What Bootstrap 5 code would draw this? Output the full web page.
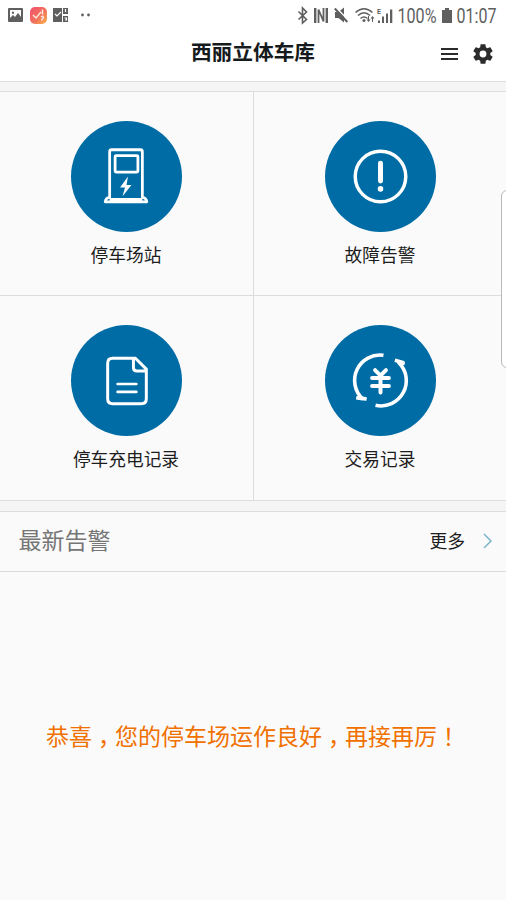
<!DOCTYPE html>
<html lang="zh-CN">
<head>
<meta charset="utf-8">
<meta name="viewport" content="width=device-width, initial-scale=1">
<title>西丽立体车库</title>
<link href="https://cdn.jsdelivr.net/npm/bootstrap@5.3.0/dist/css/bootstrap.min.css" rel="stylesheet">
<style>
body{font-family:"Noto Sans CJK SC",sans-serif;background:#fafafa;color:#1d1d1d;height:900px;overflow:hidden;line-height:1}
svg{display:block;flex:none}
.status-bar{height:32px;background:#fff}
.app-head{height:50px;background:#fff;border-bottom:1px solid #dcdcdc}
.app-title{font-size:20.7px;font-weight:700;color:#151a1c;margin:0;line-height:38px}
.head-tools{right:13px;top:11px;gap:15px}
.gap-band{height:10px;background:#f5f5f5}
.gap-band-top{height:9px}
.menu-grid{border-top:1px solid #dcdcdc}
.tile{height:204.4px;padding-top:29px;border-bottom:1px solid #dcdcdc;color:#1d1d1d;font-size:17.7px}
.tile-left{padding-right:1px}
.tile-right{border-left:1px solid #dcdcdc}
.tile-disc{width:111px;height:111px;border-radius:50%;background:#006ca5}
.tile-name{line-height:26px;margin-top:9px}
.latest{height:61px;border-top:1px solid #dcdcdc;border-bottom:1px solid #dcdcdc;padding:0 14px 0 18.500px}
.latest-title{font-size:23px;color:#757575;margin:0;padding-bottom:3px;font-weight:400}
.latest-more{font-size:17.8px;color:#1d1d1d;gap:18px}
.notice{font-size:23px;color:#f07000;margin:0;padding-top:148px;line-height:30px;white-space:nowrap}
.comma{display:inline-block;width:23px;text-align:left;padding-left:6px;font-feature-settings:"halt"}
.punct{font-family:"Noto Sans CJK TC",sans-serif}
.edge-panel{right:-8px;top:190px;width:13px;height:178px;background:#fff;border:1px solid #b9b9b9;border-radius:6px}
</style>
</head>
<body class="position-relative">
<div class="status-bar">
<svg width="506" height="32" viewBox="0 0 506 32" fill="#5f5f5f">
 <path fill-rule="evenodd" d="M9 8h13q1 0 1 1v12q0 1-1 1H9q-1 0-1-1V9q0-1 1-1zm1 2v8l3-3 2 2 3-4 3 4v-7zM13 11.500a1.200 1.200 0 1 1-.1 0z"/>
 <defs><linearGradient id="app" x2="1" y2="1"><stop stop-color="#f3506f"/><stop offset=".55" stop-color="#f2715c"/><stop offset="1" stop-color="#fbb64c"/></linearGradient></defs>
 <rect x="30" y="7" width="17" height="17" rx="5" fill="url(#app)"/>
 <path d="M33 15l3 3 5-6M42.500 9.500v5M41 17q2-1.500 2.300 0t-1.500 2.500v1" fill="none" stroke="#ffe5dc" stroke-width="1.500"/>
 <path d="M53 8h9v14h-9zM63 8h5v6h-5zM63 16h5v6h-5z"/>
 <path d="M55 14l2 2 4-4M65.500 9v3M64.500 18h2v2h-1.500" fill="none" stroke="#fff" stroke-width="1.200"/>
 <circle cx="82.500" cy="15" r="1.400"/><circle cx="88.500" cy="15" r="1.400"/>
 <path d="M298.500 11.500l8 8-4 3.500V8l4 4-8 7.500" fill="none" stroke="#5f5f5f" stroke-width="1.600"/>
 <path fill="none" stroke="#5f5f5f" stroke-width="2.400" d="M315.200 8v15M326.800 8v15"/>
 <path fill="none" stroke="#5f5f5f" stroke-width="1.800" d="M318.500 23V9.500l5 12V8"/>
 <path d="M335 12h3.500l5.500-4.500v15l-5.500-4.500H335z"/>
 <path d="M336 7.500l12.500 13" stroke="#fff" stroke-width="1.500"/><path d="M334.800 8.500l12.500 13.500" stroke="#5f5f5f" stroke-width="2"/>
 <path d="M355.500 12.500q8.500-7.500 17 0M358 15.500q6-5.500 12 0M360.500 18.500q3.500-3 7 0" fill="none" stroke="#5f5f5f" stroke-width="1.500"/>
 <circle cx="364" cy="20.500" r="1.500"/>
 <path d="M368.500 16v5M372.500 22v-5" stroke="#5f5f5f"/><path d="M366.500 19.500h4l-2 2.500zM370.500 18.500h4l-2-2.500z"/>
 <text x="377" y="14" font-family="Roboto, sans-serif" font-size="7" font-weight="700">E</text>
 <path d="M378 20.500h2V23h-2zM382 16.500h2V23h-2zM386 13.500h2V23h-2zM390 9.500h2.300V23H390z"/>
 <text x="397.500" y="23" font-family="Roboto, sans-serif" font-size="19.500" textLength="39" lengthAdjust="spacingAndGlyphs">100%</text>
 <path d="M445 8h4v2h3v13h-10V10h3z"/>
 <text x="456.500" y="23" font-family="Roboto, sans-serif" font-size="19.500" textLength="40" lengthAdjust="spacingAndGlyphs">01:07</text>
</svg>
</div>
<header class="app-head position-relative text-center">
 <h1 class="app-title">西丽立体车库</h1>
 <div class="head-tools position-absolute d-flex align-items-center">
  <svg width="17" height="22" viewBox="0 0 17 22"><path d="M0 6h17M0 11h17M0 16h17" stroke="#2b2b2b" stroke-width="1.800"/></svg>
  <svg width="20" height="22" viewBox="1.800 1 20.400 22"><path fill="#2b2b2b" d="M19.430 12.980c.04-.32.070-.64.070-.98s-.03-.66-.07-.98l2.110-1.650c.19-.15.240-.42.120-.64l-2-3.460c-.12-.22-.39-.3-.61-.22l-2.490 1c-.52-.4-1.080-.73-1.690-.98l-.38-2.650C14.460 2.180 14.250 2 14 2h-4c-.25 0-.46.18-.49.42l-.38 2.650c-.61.25-1.170.59-1.690.98l-2.490-1c-.23-.09-.49 0-.61.22l-2 3.460c-.13.22-.07.49.12.640l2.110 1.650c-.04.32-.07.65-.07.98s.03.66.07.98l-2.110 1.650c-.19.15-.24.42-.12.640l2 3.460c.12.22.39.3.61.220l2.490-1c.52.4 1.080.73 1.690.98l.38 2.650c.03.24.24.42.49.420h4c.25 0 .46-.18.490-.42l.38-2.650c.61-.25 1.170-.59 1.690-.98l2.490 1c.23.09.49 0 .610-.22l2-3.460c.12-.22.07-.49-.12-.64zM12 15.500a3.500 3.500 0 1 1 0-7 3.500 3.500 0 0 1 0 7z"/></svg>
 </div>
</header>
<div class="gap-band gap-band-top"></div>
<main>
 <div class="menu-grid row g-0 text-center">
  <a class="tile tile-left col-6 d-flex flex-column align-items-center text-decoration-none" href="#">
   <span class="tile-disc"><svg width="111" height="111" viewBox="0 0 112 112" fill="none" stroke="#fff" stroke-linejoin="round">
    <path stroke-width="2.800" d="M39 77V31q0-2 2-2h29q2 0 2 2v46q4 .5 4.500 4.500h-42Q35 77.500 39 77zM39 79h33"/>
    <rect x="44.500" y="35" width="23" height="16.500" rx="1" stroke-width="2.800"/>
    <path fill="#fff" stroke="none" d="M57.500 56l-8 11h5l-2.500 9 9-11.500h-5z"/></svg></span>
   <span class="tile-name">停车场站</span>
  </a>
  <a class="tile tile-right col-6 d-flex flex-column align-items-center text-decoration-none" href="#">
   <span class="tile-disc"><svg width="111" height="111" viewBox="0 0 112 112" fill="none" stroke="#fff" stroke-linecap="round">
    <circle cx="56" cy="56" r="25.500" stroke-width="3.500"/><path d="M56 42.500v18" stroke-width="5"/><circle cx="56" cy="68.500" r="2.800" fill="#fff" stroke="none"/></svg></span>
   <span class="tile-name">故障告警</span>
  </a>
  <a class="tile tile-left col-6 d-flex flex-column align-items-center text-decoration-none" href="#">
   <span class="tile-disc"><svg width="111" height="111" viewBox="0 0 112 112" fill="none" stroke="#fff" stroke-linecap="round" stroke-linejoin="round">
    <path stroke-width="3" d="M65 33.500H42q-5 0-5 5v36q0 5 5 5h29q5 0 5-5V44.500zM63 34v9q0 3.500 3.500 3.500H75"/>
    <path stroke-width="2.600" d="M47 59.500h19M47 67.500h19"/></svg></span>
   <span class="tile-name">停车充电记录</span>
  </a>
  <a class="tile tile-right col-6 d-flex flex-column align-items-center text-decoration-none" href="#">
   <span class="tile-disc"><svg width="111" height="111" viewBox="0 0 112 112" fill="none" stroke="#fff" stroke-width="3.600" stroke-linejoin="round">
    <path d="M59 30.600A25.500 25.500 0 0 0 38 74.500L31.500 73.500M36 73.500l6 1.500"/>
    <path d="M51 81A25.500 25.500 0 0 0 74.500 38L80.500 38.500M70.500 35.500l9 2.500"/>
    <path stroke-width="4" stroke-linecap="round" d="M50.500 45.500l5.500 5.500 5.500-5.500M47.500 53.500h17M47.500 61.500h17M56 52v16"/></svg></span>
   <span class="tile-name">交易记录</span>
  </a>
 </div>
 <div class="gap-band"></div>
 <section class="latest d-flex align-items-center justify-content-between">
  <h2 class="latest-title">最新告警</h2>
  <a class="latest-more d-flex align-items-center text-decoration-none" href="#"><span>更多</span>
   <svg width="9" height="18" viewBox="0 0 9 18"><path d="M1 2l7 7-7 7" fill="none" stroke="#78b4cc" stroke-width="1.500"/></svg></a>
 </section>
 <p class="notice text-center">恭喜<span class="comma">，</span>您的停车场运作良好<span class="comma">，</span>再接再厉<span class="punct" lang="zh-TW">！</span></p>
</main>
<div class="edge-panel position-absolute"></div>
<script src="https://cdn.jsdelivr.net/npm/bootstrap@5.3.0/dist/js/bootstrap.bundle.min.js"></script>
</body>
</html>
